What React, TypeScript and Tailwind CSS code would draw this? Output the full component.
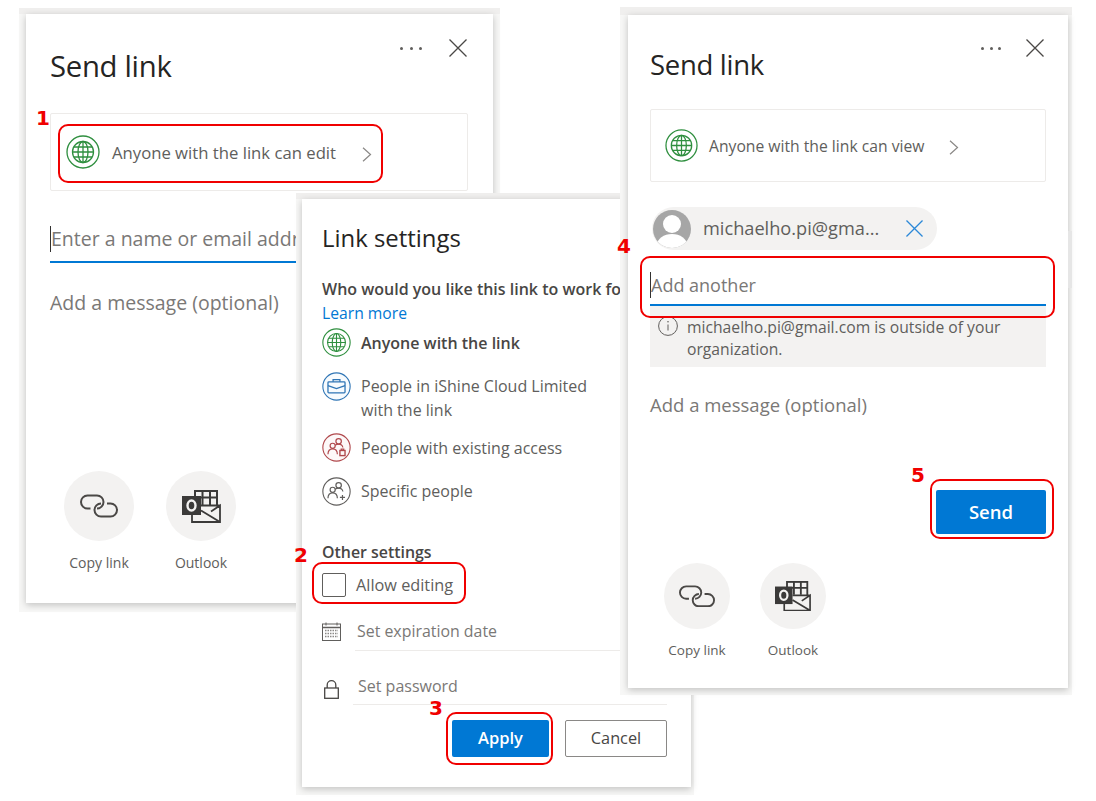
const SEGOE = "font-['Open_Sans',sans-serif]"

function Ring({ size, color, fill = 'none', children }: { size: number; color: string; fill?: string; children: React.ReactNode }) {
  return (
    <svg width={size} height={size} viewBox="0 0 34 34" fill="none" className="shrink-0">
      <circle cx="17" cy="17" r="16" stroke={color} strokeWidth="1.3" fill={fill} />
      {children}
    </svg>
  )
}

function GlobeIcon({ size }: { size: number }) {
  return (
    <Ring size={size} color="#2f8f3f">
      <g stroke="#2f8f3f" strokeWidth="1.3">
        <circle cx="17" cy="17" r="10.5" />
        <ellipse cx="17" cy="17" rx="5" ry="10.5" />
        <path d="M6.5 17h21M8 12h18M8 22h18M17 6.5v21" />
      </g>
    </Ring>
  )
}

function BriefcaseIcon() {
  return (
    <Ring size={29} color="#2f75b5" fill="#f7fbfe">
      <g stroke="#2f75b5" strokeWidth="1.5">
        <rect x="7" y="11.5" width="20" height="13" rx="1" />
        <path d="M13 11.5V9h8v2.5M7 16l10 3.5L27 16" />
      </g>
    </Ring>
  )
}

function PeopleIcon({ color, badge, fill }: { color: string; badge: 'lock' | 'plus'; fill?: string }) {
  return (
    <Ring size={29} color={color} fill={fill}>
      <g stroke={color} strokeWidth="1.4">
        <circle cx="19.5" cy="9.8" r="3.2" />
        <circle cx="12.5" cy="15" r="3" />
        <path d="M7 25c0-4 2.2-6.5 5.5-6.5S18 21 18 25M15.5 14.5c.8-1 2.2-1.4 4-1.4 2.6 0 4.5 1.4 5 3.9" />
        {badge === 'plus' ? (
          <path d="M24 21v6M21 24h6" />
        ) : (
          <>
            <rect x="21" y="20.5" width="6" height="6" strokeWidth="1.6" />
            <path d="M22.5 20.5v-1.5h3v1.5" />
          </>
        )}
      </g>
    </Ring>
  )
}

function CloseIcon({ size, color, width = 1.3 }: { size: number; color: string; width?: number }) {
  return (
    <svg width={size} height={size} viewBox="0 0 18 18" fill="none" className="shrink-0">
      <path d="M.5.5l17 17M17.5.5l-17 17" stroke={color} strokeWidth={width} />
    </svg>
  )
}

function Dots({ gap }: { gap: string }) {
  return (
    <div className={`flex ${gap}`}>
      <span className="w-[3px] h-[3px] rounded-full bg-[#605e5c]" />
      <span className="w-[3px] h-[3px] rounded-full bg-[#605e5c]" />
      <span className="w-[3px] h-[3px] rounded-full bg-[#605e5c]" />
    </div>
  )
}

function Chevron() {
  return (
    <svg width="10" height="15" viewBox="0 0 10 15" fill="none" className="shrink-0 mt-[4px]">
      <path d="M1 .8l7.5 6.7L1 14.2" stroke="#8a8886" strokeWidth="1.2" />
    </svg>
  )
}

function LinkIcon({ w }: { w: number }) {
  return (
    <svg width={w} viewBox="0 0 38 24" fill="none">
      <g stroke="#4a4846" strokeWidth="2">
        <path d="M10.5 14.5H7.5a6.5 6.5 0 0 1 0-13H17a6.5 6.5 0 0 1 6.5 6.5 6.5 6.5 0 0 1-6.5 6.5" />
        <path d="M27 9.5h3.5a6.5 6.5 0 0 1 0 13H21a6.5 6.5 0 0 1-6.5-6.5A6.5 6.5 0 0 1 21 9.5" />
      </g>
    </svg>
  )
}

function OutlookIcon({ w }: { w: number }) {
  return (
    <svg width={w} viewBox="0 0 39 33" fill="none">
      <rect x="13" y="1" width="22" height="21" fill="#f3f2f1" stroke="#3b3a39" strokeWidth="2" />
      <path d="M20.5 1v14M28 1v14M13 7.5h22" stroke="#3b3a39" strokeWidth="2" />
      <path d="M9.5 20h10V15.500h18.500V32H9.500z" fill="#f3f2f1" />
      <path d="M10 24v8h28V15.500L29 21.500M19 20.500L38 32M19 15.500h19" stroke="#3b3a39" strokeWidth="1.800" />
      <rect x="0" y="6" width="19" height="19" fill="#3b3a39" />
      <ellipse cx="9.500" cy="15.500" rx="4" ry="5" stroke="#f3f2f1" strokeWidth="2.400" />
    </svg>
  )
}

function Caret({ text }: { text: string }) {
  return <span className="border-l border-[#323130] block h-[26px] leading-[26px] whitespace-nowrap">{text}</span>
}

function Marker({ className }: { className: string }) {
  return <div className={`absolute border-2 border-[#f00000] rounded-[10px] ${className}`} />
}

function Num({ n, className }: { n: string; className: string }) {
  return <div className={`absolute font-['DejaVu_Sans',sans-serif] font-bold text-[20px] leading-[14px] text-[#f00000] ${className}`}>{n}</div>
}

export default function App() {
  return (
    <div className={`relative w-[1096px] h-[801px] bg-white overflow-hidden ${SEGOE}`}>
      {/* left window */}
      <div className="absolute left-[19px] top-[8px] w-[481px] h-[604px] bg-[#f7f7f6] border-t-[6px] border-[#f0efee] pl-[7px] pr-[7px] pb-[9px]">
        <div className="h-full bg-white shadow-[0_2px_7px_rgba(0,0,0,0.22)] pl-[24px] pr-[25px] pt-[16px]">
          <div className="flex items-start justify-between h-[54px]">
            <h1 className="mt-[18px] text-[29.3px] leading-[36px] text-[#252423] tracking-[-0.3px]">Send link</h1>
            <div className="h-9 flex items-center">
              <Dots gap="gap-[6.5px]" />
              <div className="w-[27px]" />
              <CloseIcon size={18} color="#4a4846" />
              <div className="w-px" />
            </div>
          </div>
          <div className="mt-[29px] h-[78px] border border-[#edebe9] rounded-[2px] flex items-center pl-[15px]">
            <GlobeIcon size={34} />
            <span className="ml-[12px] mt-[2px] text-[16.7px] text-[#605e5c] whitespace-nowrap">Anyone with the link can edit</span>
            <div className="ml-[26px]"><Chevron /></div>
          </div>
          <div className="mt-[35px] h-[37px] border-b-2 border-[#0078d4] text-[19.5px] text-[#7a7876]">
            <Caret text="Enter a name or email address" />
          </div>
          <div className="mt-[26px] text-[19.5px] leading-[28px] text-[#7a7876]">Add a message (optional)</div>
          <div className="mt-[154px] flex gap-[32px] ml-[14px]">
            <div className="w-[70px]">
              <div className="w-[70px] h-[70px] rounded-full bg-[#f3f2f1] flex items-center justify-center"><LinkIcon w={38} /></div>
              <div className="mt-[13px] text-[14px] leading-[18px] text-[#605e5c] text-center whitespace-nowrap">Copy link</div>
            </div>
            <div className="w-[70px]">
              <div className="w-[70px] h-[70px] rounded-full bg-[#f3f2f1] flex items-center justify-center"><OutlookIcon w={39} /></div>
              <div className="mt-[13px] text-[14px] leading-[18px] text-[#605e5c] text-center whitespace-nowrap">Outlook</div>
            </div>
          </div>
        </div>
      </div>

      {/* link settings window */}
      <div className="absolute left-[296px] top-[193px] w-[398px] h-[602px] bg-[#f7f7f6] border-t-[6px] border-[#f0efee] pl-[6px] pr-[3px] pb-[8px]">
        <div className="h-full bg-white shadow-[0_2px_7px_rgba(0,0,0,0.22)] pl-[20px] pr-[24px] pt-[23px]">
          <h2 className="text-[23.9px] leading-[32px] text-[#252423]">Link settings</h2>
          <div className="mt-[24px] text-[16px] leading-[22px] font-semibold text-[#484644] whitespace-nowrap">Who would you like this link to work for?</div>
          <div className="mt-[2px] text-[15.7px] leading-[22px] text-[#0078d4]">Learn more</div>
          <div className="mt-[4px] flex items-start gap-[10px]">
            <GlobeIcon size={29} />
            <span className="mt-[3px] text-[16px] leading-[24px] font-semibold text-[#484644]">Anyone with the link</span>
          </div>
          <div className="mt-[15px] flex items-start gap-[10px]">
            <BriefcaseIcon />
            <span className="mt-[2px] text-[16px] leading-[24px] text-[#605e5c]">People in iShine Cloud Limited<br />with the link</span>
          </div>
          <div className="mt-[11px] flex items-start gap-[10px]">
            <PeopleIcon color="#b0484c" badge="lock" fill="#fdf8f8" />
            <span className="mt-[3px] text-[16px] leading-[24px] text-[#605e5c]">People with existing access</span>
          </div>
          <div className="mt-[15px] flex items-start gap-[10px]">
            <PeopleIcon color="#605e5c" badge="plus" />
            <span className="mt-[2px] text-[16px] leading-[24px] text-[#605e5c]">Specific people</span>
          </div>
          <div className="mt-[35px] text-[15.9px] leading-[22px] font-semibold text-[#484644]">Other settings</div>
          <div className="mt-[10px] flex items-center gap-[10px]">
            <div className="w-[24px] h-[24px] border border-[#605e5c] rounded-[2px]" />
            <span className="text-[16.3px] leading-[24px] text-[#605e5c]">Allow editing</span>
          </div>
          <div className="mt-[22px] flex items-start">
            <svg width="19" height="19" viewBox="0 0 19 19" fill="none" className="mt-[3px] shrink-0">
              <rect x=".5" y="2" width="18" height="16.5" stroke="#605e5c" />
              <path d="M.5 5.5h18" stroke="#605e5c" strokeWidth="1.5" />
              <path d="M4 .5v3M15 .5v3" stroke="#605e5c" />
              <path d="M3 8.5h13M3 11.5h13M3 14.5h13" stroke="#8a8886" strokeWidth="1.4" strokeDasharray="1.5 1" />
            </svg>
            <div className="ml-[14px] flex-1 border-b border-[#edebe9] pl-[2px] pb-[7px] text-[15.9px] leading-[24px] text-[#7a7876]">Set expiration date</div>
          </div>
          <div className="mt-[23px] flex items-start">
            <svg width="15" height="19" viewBox="0 0 15 19" fill="none" className="mt-[6px] ml-[2px] shrink-0">
              <rect x=".7" y="8" width="13.6" height="10.3" stroke="#484644" strokeWidth="1.3" />
              <path d="M3.2 8V5a4.3 4.3 0 0 1 8.6 0v3" stroke="#484644" strokeWidth="1.3" />
            </svg>
            <div className="ml-[14px] flex-1 border-b border-[#edebe9] pl-[5px] pb-[6px] text-[16px] leading-[24px] text-[#7a7876]">Set password</div>
          </div>
          <div className="mt-[15px] flex justify-end gap-[16px]">
            <button className="w-[97px] h-[37px] rounded-[2px] bg-[#0078d4] text-white text-[16.5px] font-semibold">Apply</button>
            <button className="w-[102px] h-[37px] rounded-[2px] border border-[#8a8886] text-[#484644] text-[16.3px]">Cancel</button>
          </div>
        </div>
      </div>

      {/* right window */}
      <div className="absolute left-[620px] top-[7px] w-[452px] h-[688px] bg-[#f7f7f6] border-t-[8px] border-[#f0efee] pl-[8px] pr-[4px] pb-[7px]">
        <div className="h-full bg-white shadow-[0_2px_7px_rgba(0,0,0,0.22)] pl-[22px] pr-[22px] pt-[15px]">
          <div className="flex items-start justify-between h-[53px]">
            <h1 className="mt-[17px] text-[27.5px] leading-[36px] text-[#252423] tracking-[-0.3px]">Send link</h1>
            <div className="h-9 flex items-center mr-[2px]">
              <Dots gap="gap-[5.5px]" />
              <div className="w-[25px]" />
              <CloseIcon size={18} color="#4a4846" />
            </div>
          </div>
          <div className="mt-[26px] h-[73px] border border-[#edebe9] rounded-[2px] flex items-center pl-[14px]">
            <GlobeIcon size={33} />
            <span className="ml-[11px] mt-[2px] text-[15.7px] text-[#605e5c] whitespace-nowrap">Anyone with the link can view</span>
            <div className="ml-[25px]"><Chevron /></div>
          </div>
          <div className="mt-[25px] ml-[2px] w-[285px] h-[43px] rounded-full bg-[#f3f2f1] flex items-center pl-[1px]">
            <svg width="38" height="40" viewBox="0 0 38 40" className="shrink-0">
              <defs><clipPath id="av"><circle cx="19" cy="20" r="19" /></clipPath></defs>
              <g clipPath="url(#av)">
                <rect width="38" height="40" fill="#a6a6a6" />
                <circle cx="19" cy="15" r="9" fill="#fff" />
                <ellipse cx="19" cy="36" rx="15" ry="11" fill="#fff" />
              </g>
            </svg>
            <span className="ml-[12px] text-[18.2px] text-[#605e5c] whitespace-nowrap">michaelho.pi@gma...</span>
            <div className="ml-[27px]"><CloseIcon size={17} color="#2b88d8" width={1.4} /></div>
          </div>
          <div className="mt-[21px] h-[35px] border-b-2 border-[#0078d4] text-[18px] text-[#7a7876] pt-[1px]">
            <Caret text="Add another" />
          </div>
          <div className="h-[61px] bg-[#f3f2f1] flex items-start pl-[8px] pt-[10px] gap-[9px]">
            <svg width="20" height="20" viewBox="0 0 20 20" fill="none" className="shrink-0">
              <circle cx="10" cy="10" r="9.4" stroke="#605e5c" />
              <path d="M10 8.5v6" stroke="#605e5c" />
              <circle cx="10" cy="5.8" r=".8" fill="#605e5c" />
            </svg>
            <p className="text-[15.7px] leading-[22px] text-[#605e5c] whitespace-nowrap">michaelho.pi@gmail.com is outside of your<br />organization.</p>
          </div>
          <div className="mt-[24px] text-[18.5px] leading-[28px] text-[#7a7876]">Add a message (optional)</div>
          <div className="mt-[71px] flex justify-end">
            <button className="w-[110px] h-[44px] rounded-[2px] bg-[#0078d4] text-white text-[18.5px] font-semibold">Send</button>
          </div>
          <div className="mt-[29px] ml-[14px] flex gap-[30px]">
            <div className="w-[66px]">
              <div className="w-[66px] h-[66px] rounded-full bg-[#f3f2f1] flex items-center justify-center"><LinkIcon w={36} /></div>
              <div className="mt-[12px] text-[13.5px] leading-[18px] text-[#605e5c] text-center whitespace-nowrap">Copy link</div>
            </div>
            <div className="w-[66px]">
              <div className="w-[66px] h-[66px] rounded-full bg-[#f3f2f1] flex items-center justify-center"><OutlookIcon w={36} /></div>
              <div className="mt-[12px] text-[13.5px] leading-[18px] text-[#605e5c] text-center whitespace-nowrap">Outlook</div>
            </div>
          </div>
        </div>
      </div>
      <div className="absolute left-[1068px] top-[231px] w-[4px] h-[57px] bg-[#e6e6e6]" />

      {/* annotations */}
      <Marker className="left-[58px] top-[124px] w-[325px] h-[59px]" />
      <Marker className="left-[312px] top-[562px] w-[154px] h-[42px]" />
      <Marker className="left-[446px] top-[712px] w-[107px] h-[53px]" />
      <Marker className="left-[640px] top-[256px] w-[415px] h-[62px]" />
      <Marker className="left-[930px] top-[479px] w-[124px] h-[60px]" />
      <Num n="1" className="left-[36px] top-[111px]" />
      <Num n="2" className="left-[294px] top-[548px]" />
      <Num n="3" className="left-[429px] top-[701px]" />
      <Num n="4" className="left-[617px] top-[239px]" />
      <Num n="5" className="left-[911px] top-[468px]" />
    </div>
  )
}
